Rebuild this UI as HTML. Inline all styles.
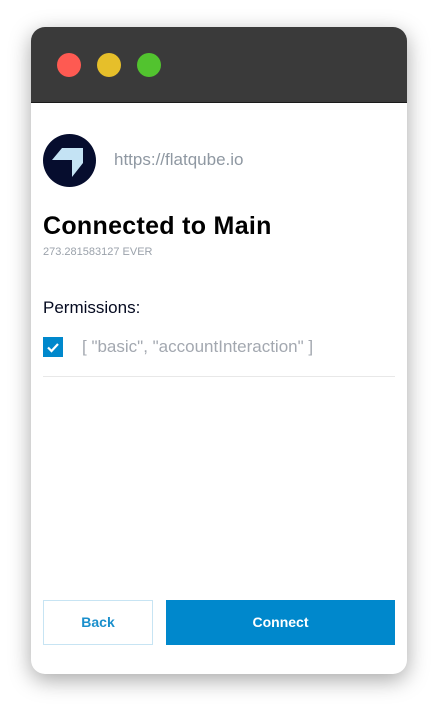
<!DOCTYPE html>
<html><head><meta charset="utf-8"><style>
body{margin:0;width:438px;height:709px;background:#fff;font-family:"Liberation Sans",sans-serif;position:relative;overflow:hidden}
.win{position:absolute;left:31px;top:27px;width:376px;height:647px;border-radius:14px;background:#fff;overflow:hidden;box-shadow:0 6px 22px rgba(0,0,0,.35)}
.bar{position:absolute;left:0;top:0;width:376px;height:75px;background:#3a3a3a;border-bottom:1px solid #1a1a1a}
.dot{position:absolute;top:26px;width:24px;height:24px;border-radius:50%}
.a{position:absolute;white-space:nowrap}
</style></head><body>
<div class="win">
<div class="bar">
<div class="dot" style="left:26px;background:#fe5a52"></div>
<div class="dot" style="left:66px;background:#e6bf2a"></div>
<div class="dot" style="left:106px;background:#52c32f"></div>
</div>
<svg class="a" style="left:12px;top:107px" width="53" height="53" viewBox="0 0 53 53"><circle cx="26.5" cy="26.5" r="26.5" fill="#060d2e"/><path d="M9 26 L19 14 L40 14 L40 29 L29 43 L29 26 Z" fill="#c4e3f4"/></svg>
<div class="a" style="left:83px;top:123px;font-size:17px;color:#8f98a2">https://flatqube.io</div>
<div class="a" style="left:12px;top:185px;font-size:25px;font-weight:bold;color:#000;letter-spacing:0.3px">Connected to Main</div>
<div class="a" style="left:12px;top:219px;font-size:11px;color:#9ba2ab">273.281583127 EVER</div>
<div class="a" style="left:12px;top:271px;font-size:17px;color:#050a20">Permissions:</div>
<div class="a" style="left:12px;top:310px;width:20px;height:20px;background:#0088cc"><svg width="20" height="20"><path d="M5 10.5 L8.5 14 L15 7" stroke="#fff" stroke-width="2.2" fill="none"/></svg></div>
<div class="a" style="left:51px;top:310px;font-size:17px;color:#a3a8b0">[ "basic", "accountInteraction" ]</div>
<div class="a" style="left:12px;top:349px;width:352px;height:1px;background:#e8e8e8"></div>
<div class="a" style="left:12px;top:573px;width:108px;height:43px;border:1px solid #c7e4f3;color:#1a8fcc;font-size:14px;font-weight:bold;text-align:center;line-height:43px">Back</div>
<div class="a" style="left:135px;top:573px;width:229px;height:45px;background:#0088cc;color:#fff;font-size:14px;font-weight:bold;text-align:center;line-height:45px">Connect</div>
</div>
</body></html>
